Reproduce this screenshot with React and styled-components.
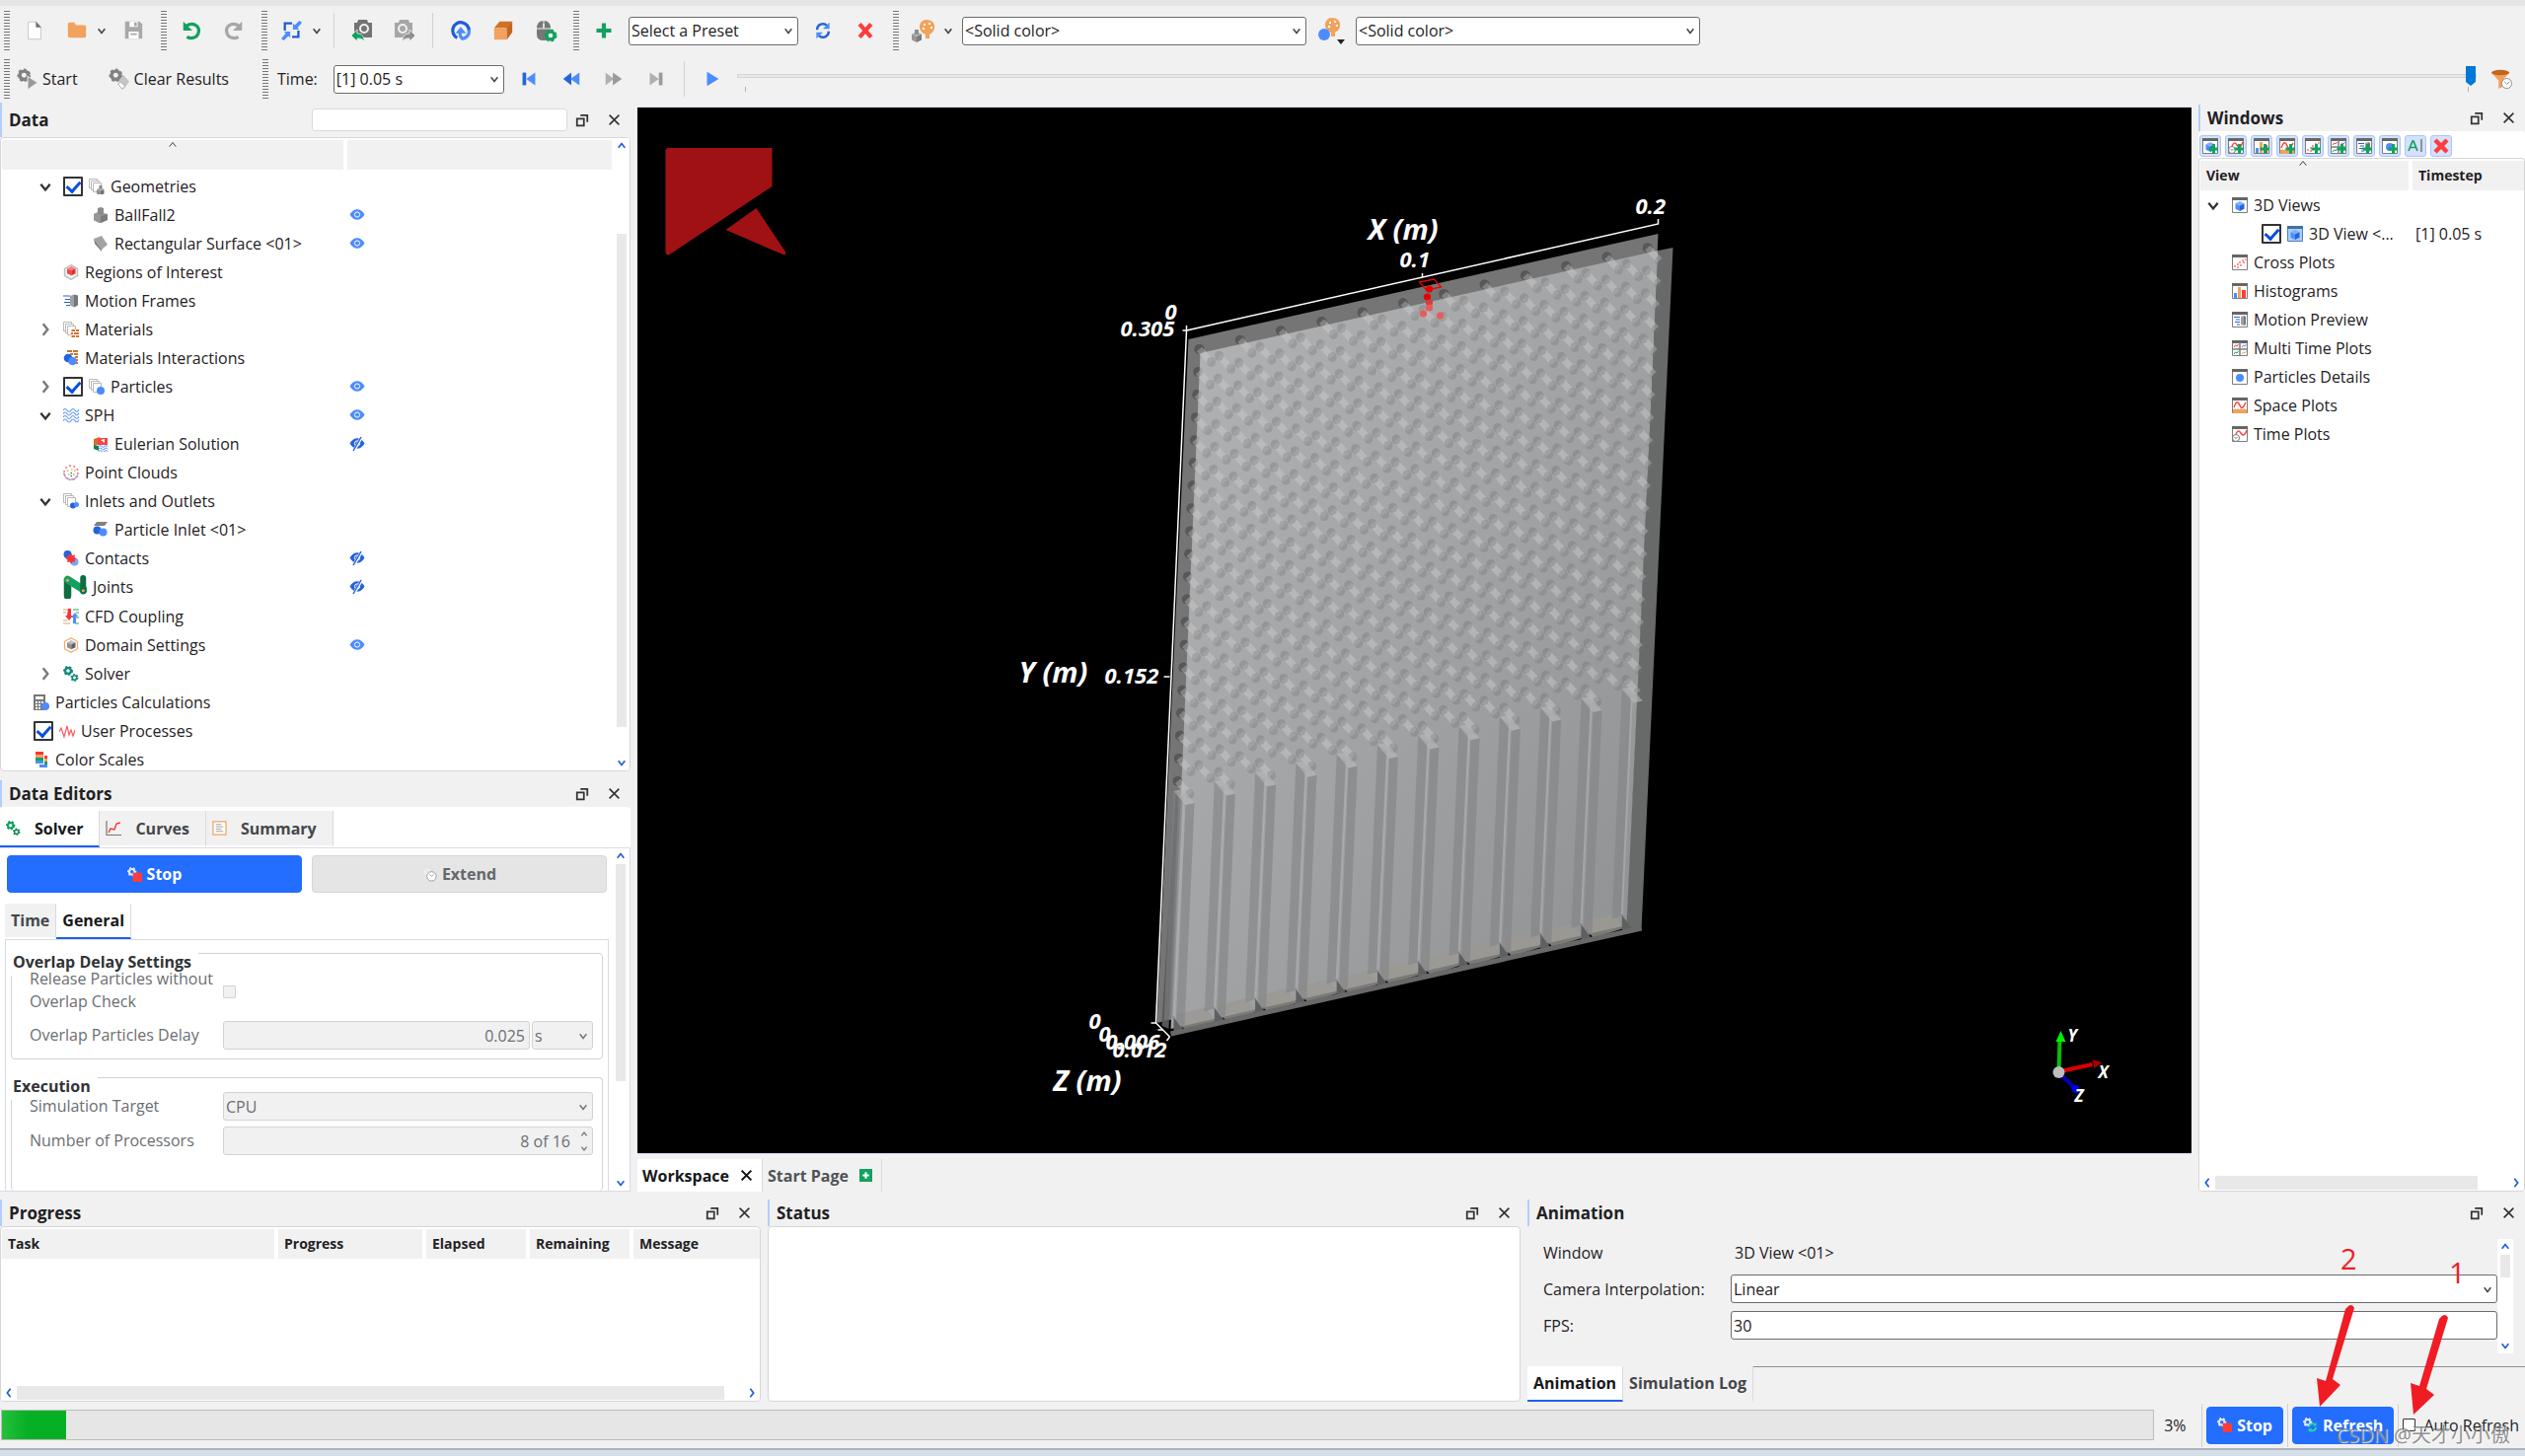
import React from 'react';
import styled, { createGlobalStyle, css } from 'styled-components';

const GlobalStyle = createGlobalStyle`
  * {
    box-sizing: border-box;
  }

  body {
    margin: 0;
    background: #f1f1f1;
    color: #1f2124;
    font-family: 'Open Sans', 'Noto Sans', 'Noto Sans CJK SC', sans-serif;
    font-size: 16px;
    line-height: 22px;
  }

  button,
  input,
  select {
    font: inherit;
    color: inherit;
  }

  button {
    border: 0;
    padding: 0;
    background: none;
  }

  svg {
    display: block;
    flex-shrink: 0;
  }
`;

/* ---------- icons ---------- */

const Svg = ({ size = 16, box = 16, children }) => (
  <svg width={size} height={size} viewBox={`0 0 ${box} ${box}`} fill="none" aria-hidden="true">
    {children}
  </svg>
);

const Stack = () => (
  <g stroke="#b9b9b9" fill="#fff">
    <path d="M.5.5h8v9h-8z" />
    <path d="M2.500 2.500h8v9h-8z" />
    <path d="M4.500 4.500h8v9h-8z" />
  </g>
);

const Frame = () => (
  <>
    <path d="M.5.5h15v15H.5z" fill="#fff" stroke="#7d7d7d" />
    <path d="M0 0h16v3H0z" fill="#666" />
  </>
);

const Cube = ({ x = 0, y = 0, s = 1, top = '#7db0ff', left = '#4d8cff', right = '#2463dc' }) => (
  <g transform={`translate(${x} ${y}) scale(${s})`}>
    <path d="M5 0l5 2.500L5 5 0 2.500z" fill={top} />
    <path d="M0 2.500L5 5v6L0 8.500z" fill={left} />
    <path d="M10 2.500L5 5v6l5-2.500z" fill={right} />
  </g>
);

const Gear = ({ x, y, r = 4, color = '#12a15f', hole = '#fff' }) => (
  <g>
    <circle cx={x} cy={y} r={r - 1} fill={color} />
    <circle cx={x} cy={y} r={r - 1} stroke={color} strokeWidth="2" strokeDasharray={`${r * 0.4} ${r * 0.385}`} />
    <circle cx={x} cy={y} r={r * 0.36} fill={hole} />
  </g>
);

const Plus = ({ x, y }) => (
  <path d={`M${x} ${y - 5}v10M${x - 5} ${y}h10`} stroke="#12a15f" strokeWidth="3" />
);

const treeIcons = {
  geometries: (
    <>
      <Stack />
      <Cube x={8} y={9} s={0.75} top="#a9a9a9" left="#8e8e8e" right="#747474" />
      <path d="M10.500 7h3v3h-3z" fill="#8a8a8a" />
    </>
  ),
  body: (
    <>
      <Cube x={1} y={4} s={1.1} top="#b5b5b5" left="#979797" right="#7c7c7c" />
      <path d="M1 7l6-2 8 2v6l-7 3-7-3z" fill="#979797" />
      <path d="M8 9l7-2v6l-7 3z" fill="#7c7c7c" />
      <path d="M5 1l3-1 3 1v6l-3 1-3-1z" fill="#8a8a8a" />
    </>
  ),
  surface: (
    <>
      <path d="M1 3l8-3 6 9-6 5z" fill="#a3a3a3" />
      <path d="M1 3l8 11v2L2 8z" fill="#7d7d7d" />
    </>
  ),
  regions: (
    <>
      <path d="M8 .7l6.500 3.600v7.400L8 15.300l-6.500-3.600V4.300z" fill="#f1f1f1" stroke="#bdbdbd" strokeWidth="1.400" />
      <Cube x={4} y={2} s={0.85} top="#ff7b7f" left="#fb4247" right="#d92f35" />
    </>
  ),
  motion: (
    <>
      <path d="M0 3h7M2 6.500h5M1 9.500h6M3 12.500h4" stroke="#2b61d1" />
      <path d="M7 3l4-1.500v13L7 12.500z" fill="#a1a1a1" />
      <path d="M11 1.500l4 1v10l-4 2z" fill="#777" />
    </>
  ),
  materials: (
    <>
      <Stack />
      <path d="M8 8h8v8H8z" fill="#fff" />
      <path d="M8.500 9h3.500M13 9h3M8 12h2M11 12h5M8.500 15h3.500M13 15h3" stroke="#d0722a" strokeWidth="2" />
    </>
  ),
  interactions: (
    <>
      <path d="M4 1h5M10 1h5M7 4h3M11 4h4M12 7h3M12 10h3M12 13h3" stroke="#d0722a" strokeWidth="2" />
      <circle cx="5" cy="8" r="4.300" fill="#2463dc" />
      <circle cx="9.500" cy="11" r="4.300" fill="#4d8cff" />
    </>
  ),
  particles: (
    <>
      <Stack />
      <circle cx="12" cy="12" r="4" fill="#4d8cff" />
    </>
  ),
  waves: (
    <path
      d="M0 3q2-3 4 0t4 0 4 0 4-1M0 6.500q2-3 4 0t4 0 4 0 4-1M0 10q2-3 4 0t4 0 4 0 4-1M0 13.500q2-3 4 0t4 0 4 0 4-1"
      stroke="#5c94f5"
      strokeWidth="1.100"
    />
  ),
  eulerian: (
    <>
      <path d="M1 3l6-2v7L1 10z" fill="#d0722a" />
      <path d="M5 2h10v7H5z" fill="#fb4247" />
      <path d="M8 4l4-1v4M1 10h5v4l-5-2z" fill="#fff" />
      <path d="M1 9l5 1v5l-5-2z" fill="#12814c" />
      <path d="M6 9h10v7H6z" fill="#fff" />
      <path d="M6 10.500q1.500-2 3 0t3 0 3 0M6 13q1.500-2 3 0t3 0 3 0M6 15.500q1.500-2 3 0t3 0 3 0" stroke="#4d8cff" />
    </>
  ),
  cloud: (
    <>
      <circle cx="8" cy="8" r="7" stroke="#fb7073" strokeWidth="1.600" strokeDasharray="2 2.400" />
      <path d="M1 8.500a7 7 0 0 0 14 0" stroke="#6b9bf5" strokeWidth="1.600" strokeDasharray="2 2.400" />
      <path d="M4 6h1.500M8 5h1.500M11 6h1.500M5 10h1.500M10 10h1.500" stroke="#f2a25c" strokeWidth="1.500" />
      <path d="M7.500 8.500H9M7.500 11.500H9" stroke="#12a15f" strokeWidth="1.500" />
    </>
  ),
  inlets: (
    <>
      <Stack />
      <circle cx="10" cy="12.500" r="3" fill="#2463dc" />
      <circle cx="13.500" cy="11.500" r="2.500" fill="#4d8cff" />
    </>
  ),
  inlet: (
    <>
      <path d="M4 0h11l-3 4H1z" fill="#808080" />
      <circle cx="4.500" cy="8.500" r="4" fill="#2463dc" />
      <circle cx="10.500" cy="10.500" r="4" fill="#4d8cff" />
    </>
  ),
  contacts: (
    <>
      <circle cx="4.500" cy="4" r="4" fill="#2463dc" />
      <circle cx="11.500" cy="11.500" r="4" fill="#79a6f7" />
      <path d="M8 3l1.500 2L12 4.500 11.500 7l2 1.500-2 1 .5 2.500-2.500-.5L8 13.500l-1.500-2L4 12l.5-2.500-2-1L4.500 7 4 4.500l2.500.5z" fill="#fb3339" />
    </>
  ),
  joints: (
    <>
      <path d="M3 4v10" stroke="#0d6e41" strokeWidth="5" strokeLinecap="round" />
      <path d="M3 3l11 7" stroke="#12a15f" strokeWidth="5" strokeLinecap="round" />
      <path d="M13.500 2v9" stroke="#0d6e41" strokeWidth="4" strokeLinecap="round" />
      <circle cx="3" cy="3.500" r="1" fill="#f2a25c" />
      <circle cx="13.500" cy="10.500" r="1" fill="#f2a25c" />
    </>
  ),
  cfd: (
    <>
      <path d="M0 1h5M0 4h3M0 12h4M0 15h7" stroke="#d8a36a" />
      <path d="M10 1h6M13 4h3M12 9h4M12 15h4" stroke="#2ba56a" />
      <path d="M5 0h3v7h2l-4 5-4-5h2z" fill="#fb3339" />
      <path d="M10 15h3V8h2l-3-4-4 5h2z" fill="#4d8cff" />
    </>
  ),
  domain: (
    <>
      <path d="M8 .7l6.500 3.600v7.400L8 15.300l-6.500-3.600V4.300z" stroke="#f2a96b" strokeWidth="1.200" />
      <Cube x={4} y={3} s={0.85} top="#bbb" left="#8f8f8f" right="#606060" />
    </>
  ),
  gears: (
    <>
      <Gear x={5} y={5} r={5} color="#12887a" />
      <Gear x={11.5} y={12} r={4} color="#12887a" />
    </>
  ),
  greenGears: (
    <>
      <Gear x={5} y={5} r={5} color="#12a15f" />
      <Gear x={11.5} y={12} r={4} color="#0d8a4f" />
    </>
  ),
  calculator: (
    <>
      <path d="M0 0h12v16H0z" fill="#777" />
      <path d="M2 2h8v3H2zM2 7h2v2H2zM5 7h2v2H5zM8 7h2v2H8zM2 10h2v2H2zM5 10h2v2H5zM2 13h2v2H2zM5 13h2v2H5z" fill="#fff" />
      <circle cx="12" cy="12" r="4" fill="#4d8cff" />
    </>
  ),
  pulse: <path d="M0 9l2-4 3 9 3-11 2 9 2-5 2 6 2-6" stroke="#fb5a60" strokeWidth="1.200" />,
  scales: (
    <>
      <path d="M2 0h8v3H2z" fill="#fb3339" />
      <path d="M2 3h8v3H2z" fill="#f2a25c" />
      <path d="M2 6h8v3H2z" fill="#12a15f" />
      <path d="M2 9h8v3H2zM6 13h8v3H6z" fill="#4d8cff" />
      <path d="M11 4h3v3h-3z" fill="#fb3339" />
      <path d="M11 7h3v3h-3z" fill="#f2a25c" />
      <path d="M11 10h3v3h-3z" fill="#12a15f" />
    </>
  ),
  curves: (
    <>
      <path d="M1 0v14.500h15" stroke="#777" strokeWidth="1.200" />
      <path d="M3 12l2-4 4 1 2-6 4-1" stroke="#fb3339" strokeWidth="1.400" />
    </>
  ),
  summary: (
    <>
      <path d="M1 1h14v14H1z" fill="#fff" stroke="#f2a25c" strokeWidth="1.300" />
      <path d="M4 4h6M4 6.500h8M4 9h6M4 11.500h8" stroke="#999" />
    </>
  ),
  stop: (
    <>
      <Gear x={5} y={5} r={5} color="#dfe8fb" hole="#236dff" />
      <path d="M6 6h10v10H6z" fill="#fb3d3d" />
    </>
  ),
  extend: (
    <>
      <Gear x={5} y={5} r={4} color="#efefef" hole="#e5e5e5" />
      <circle cx="10" cy="10" r="5" fill="#fff" stroke="#999" />
      <path d="M8 8l2 2 2-2" stroke="#999" />
    </>
  ),
  refresh: (
    <>
      <Gear x={5} y={5} r={5} color="#dfe8fb" hole="#236dff" />
      <path d="M6.500 10a4 4 0 0 1 7-2M14 10.500a4 4 0 0 1-7 2.500" stroke="#1fdd97" strokeWidth="2" />
      <path d="M14.500 5v4h-4zM6 16v-4h4z" fill="#1fdd97" />
    </>
  ),
  view3d: (
    <>
      <Frame />
      <Cube x={3.5} y={4} s={0.9} />
    </>
  ),
  view3dActive: (
    <>
      <path d="M.5.5h15v15H.5z" fill="#a9cdf5" stroke="#4d82b8" />
      <path d="M0 0h16v3H0z" fill="#41719f" />
      <Cube x={3.5} y={4} s={0.9} />
    </>
  ),
  cross: (
    <>
      <Frame />
      <path d="M2 12h2M5 10h2M5 13h2M7 8h2M8 11h2M10 6h2M11 8h2M13 5h1.500" stroke="#fb7073" strokeWidth="1.600" />
    </>
  ),
  histogram: (
    <>
      <Frame />
      <path d="M2 10h3v5H2z" fill="#4d8cff" />
      <path d="M6 4h3v11H6z" fill="#f2a25c" />
      <path d="M10 7h4v8h-4z" fill="#fb3d3d" />
    </>
  ),
  motionPreview: (
    <>
      <Frame />
      <path d="M2 5.500h6M4 8h4M3 10.500h5M5 13h3" stroke="#2b61d1" />
      <path d="M9 5l3-1v10l-3-1z" fill="#a1a1a1" />
      <path d="M12 4l2 1v8l-2 1z" fill="#777" />
    </>
  ),
  multi: (
    <>
      <Frame />
      <path d="M8 2v14M0 9h16" stroke="#7d7d7d" strokeWidth="1.500" />
      <path d="M2 7l1.500-2L5 6l1.500-2" stroke="#fb3d3d" />
      <path d="M10 7l1.500-2L13 6l1.500-2" stroke="#4d8cff" />
      <path d="M2 14l1.500-2L5 13l1.500-2" stroke="#12a15f" />
      <path d="M10 14l1.500-2L13 13l1.500-2" stroke="#f2a25c" />
    </>
  ),
  details: (
    <>
      <Frame />
      <circle cx="8" cy="9" r="4" fill="#4d8cff" />
    </>
  ),
  space: (
    <>
      <Frame />
      <path d="M1 12h14v4H1z" fill="#f2a25c" />
      <path d="M3 11v2M6 11v2M9 11v2M12 11v2" stroke="#f2a25c" />
      <path d="M2 10c2-6 4-7 6-2s4 1 6-3" stroke="#fb3d3d" strokeWidth="1.400" />
    </>
  ),
  time: (
    <>
      <Frame />
      <path d="M4 8c2-4 3-4 5-1s4 3 6-3" stroke="#fb3d3d" strokeWidth="1.400" />
      <circle cx="4" cy="12" r="3.500" fill="#fff" stroke="#777" />
      <path d="M2.500 11L4 12.500 5.500 11" stroke="#777" />
    </>
  ),
  label: (
    <>
      <path d="M1 13L5 3h1l4 10M2.500 9.500h6" stroke="#12a15f" strokeWidth="1.700" />
      <path d="M14 1v13" stroke="#777" strokeWidth="1.500" />
    </>
  ),
  remove: <path d="M2 2l12 12M14 2L2 14" stroke="#fb3d3d" strokeWidth="4.500" />,
};

const TreeIcon = ({ name, size = 16 }) => <Svg size={size}>{treeIcons[name]}</Svg>;

const Camera = ({ color, arrow, flip }) => (
  <g transform={flip ? 'translate(24 0) scale(-1 1)' : undefined}>
    <path d="M4 4h3l1-3h9l1 3h4v15H4z" fill={color} />
    <circle cx="14" cy="10" r="4" stroke="#f1f1f1" strokeWidth="2" />
    <path d="M1 17l6-6v4c5 0 7 3 7 8-2-3-4-3-7-3v3z" fill={arrow} stroke="#f1f1f1" strokeWidth=".8" />
  </g>
);

const Palette = () => (
  <>
    <path d="M15 1c6 0 9 4 8 9-1 4-4 5-5 6v4h-4v-4c-4-2-6-4-6-8 0-4 3-7 7-7z" fill="#f2a25c" />
    <path d="M12 6h2M17 5h2M11 10h2M19 9h2" stroke="#fff" strokeWidth="2" />
  </>
);

const toolIcons = {
  doc: (
    <>
      <path d="M5 2.500h9l5 6v13H5z" fill="#fff" stroke="#c4c4c4" />
      <path d="M13.500 2l6 6.500h-6z" fill="#707070" />
    </>
  ),
  folder: <path d="M2 5q0-2 2-2h5l2 3h9q2 0 2 2v10q0 2-2 2H4q-2 0-2-2z" fill="#f2a25c" />,
  save: (
    <>
      <path d="M3 2h16l3 3v16H3z" fill="#a9a9a9" />
      <path d="M8 2h9v6H8zM7 13h11v8H7z" fill="#fff" />
      <path d="M13 3h3v4h-3zM9 15h7v2H9z" fill="#a9a9a9" />
    </>
  ),
  undo: (
    <>
      <path d="M6 7c8-5 15 0 14 6-1 7-8 9-13 6" stroke="#12a15f" strokeWidth="3.500" />
      <path d="M3 2v10h10z" fill="#12a15f" />
    </>
  ),
  redo: (
    <>
      <path d="M18 7C10 2 3 7 4 13c1 7 8 9 13 6" stroke="#a6a6a6" strokeWidth="3.500" />
      <path d="M21 2v10H11z" fill="#a6a6a6" />
    </>
  ),
  fit: (
    <>
      <path d="M4 12V4h8M19 12v7h-7" stroke="#1d5bd8" strokeWidth="2.500" />
      <path d="M13 4v7h7l-2-2 5-6-3-2-5 5zM10 20v-7H3l2 2-5 6 3 2 5-5z" fill="#4d8cff" />
    </>
  ),
  camera: <Camera color="#737373" arrow="#12a15f" />,
  cameraOff: <Camera color="#a6a6a6" arrow="#8f8f8f" flip />,
  rotate: (
    <>
      <path d="M8 20A9 9 0 1 1 21 12" stroke="#1d5bd8" strokeWidth="3.500" />
      <path d="M21 11c1 6-3 9-7 10-2-1-3-4-3-7" stroke="#4d8cff" strokeWidth="3.500" />
      <path d="M6 15l6-7 6 7z" fill="#4d8cff" />
    </>
  ),
  box: (
    <>
      <path d="M2 9l6-7h14l-5 7z" fill="#d0722a" />
      <path d="M2 9h14v13H2z" fill="#f2a25c" />
      <path d="M16 9l6-7v12l-6 8z" fill="#c2661f" />
    </>
  ),
  mouse: (
    <>
      <path d="M3 10q0-8 7-8t7 8v6q0 6-7 6t-7-6z" fill="#777" />
      <path d="M3 10h14M10 2v8" stroke="#f1f1f1" />
      <path d="M9 5h2v4H9z" fill="#ddd" />
      <Gear x={17} y={17} r={6.5} hole="#f1f1f1" />
    </>
  ),
  plus: <path d="M12 3v18M3 12h18" stroke="#12a15f" strokeWidth="5" />,
  sync: (
    <>
      <path d="M5 11a7 7 0 0 1 12-5M19 13a7 7 0 0 1-12 5" stroke="#2463dc" strokeWidth="3" />
      <path d="M20 2v8h-8zM4 22v-8h8z" fill="#4d8cff" />
    </>
  ),
  cross: <path d="M5 4l14 16M19 4L5 20" stroke="#fb3d3d" strokeWidth="5" />,
  paintBody: (
    <>
      <Palette />
      <Cube x={0} y={13} s={1} top="#b5b5b5" left="#979797" right="#7c7c7c" />
      <path d="M3 11h4v5H3z" fill="#8e8e8e" />
    </>
  ),
  paintParticle: (
    <>
      <Palette />
      <circle cx="7" cy="18" r="6" fill="#4d8cff" />
    </>
  ),
  start: (
    <>
      <Gear x={8} y={8} r={7.5} color="#828282" hole="#f1f1f1" />
      <path d="M12 9l11 7-11 8z" fill="#9b9b9b" stroke="#f1f1f1" />
    </>
  ),
  clear: (
    <>
      <Gear x={8} y={8} r={7.5} color="#828282" hole="#f1f1f1" />
      <path d="M16 7l7 8-7 9-6-6z" fill="#c4c4c4" />
      <path d="M13 15l5 5-3 3-4-5z" fill="#fff" stroke="#b0b0b0" />
    </>
  ),
  first: (
    <>
      <path d="M5 5h4v14H5z" fill="#2463dc" />
      <path d="M19 5v14l-10-7z" fill="#4d8cff" />
    </>
  ),
  prev: (
    <>
      <path d="M12 5v14l-9-7z" fill="#2463dc" />
      <path d="M21 5v14l-10-7z" fill="#4d8cff" />
    </>
  ),
  next: (
    <>
      <path d="M3 5v14l9-7z" fill="#b0b0b0" />
      <path d="M11 5v14l10-7z" fill="#9a9a9a" />
    </>
  ),
  last: (
    <>
      <path d="M5 5v14l10-7z" fill="#b0b0b0" />
      <path d="M15 5h4v14h-4z" fill="#9a9a9a" />
    </>
  ),
  play: <path d="M6 4v16l13-8z" fill="#4d8cff" />,
  funnel: (
    <>
      <path d="M1 5l8 9v9l4-2v-7l8-9z" fill="#f2a25c" />
      <ellipse cx="11" cy="5" rx="10" ry="3" fill="#c2661f" />
      <circle cx="18" cy="17" r="5.500" fill="#fff" stroke="#888" />
      <path d="M15.500 15l2.500 2.500 3-2" stroke="#888" />
    </>
  ),
};

const ToolIcon = ({ name, size = 22 }) => (
  <Svg size={size} box={24}>
    {toolIcons[name]}
  </Svg>
);

const arrows = {
  down: 'M2 4l4 5 4-5',
  up: 'M2 8l4-5 4 5',
  left: 'M8 1L4 6l4 5',
  right: 'M4 1l4 5-4 5',
};

const Arrow = ({ dir = 'down', size = 10, color = '#444', weight = 2 }) => (
  <Svg size={size} box={12}>
    <path d={arrows[dir]} stroke={color} strokeWidth={weight} />
  </Svg>
);

const Eye = ({ hidden }) => (
  <Svg>
    <path d="M.5 7.500c4-7 11-7 15 0-4 7-11 7-15 0z" fill={hidden ? '#2463dc' : '#4d8cff'} />
    <circle cx="8" cy="7.500" r="2.600" stroke="#fff" />
    {hidden && (
      <>
        <path d="M4 16L13 0" stroke="#fff" strokeWidth="3" />
        <path d="M4 15L12 1" stroke="#2463dc" strokeWidth="1.500" />
      </>
    )}
  </Svg>
);

/* ---------- shell ---------- */

const Window = styled.div`
  display: flex;
  flex-direction: column;
  height: 100vh;
  position: relative;
  overflow: hidden;
  border-bottom: 6px solid #d5dfea;
`;

const TopStrip = styled.div`
  flex: none;
  height: 6px;
  background: #e5e5e5;
`;

const Toolbar = styled.div`
  display: flex;
  flex: none;
  align-items: center;
  gap: 7px;
  height: ${({ $height }) => $height}px;
  padding: 0 6px 0 1px;
`;

const Handle = styled.span`
  flex: none;
  width: 6px;
  height: 40px;
  margin-left: 3px;
  background: repeating-linear-gradient(#777 0 1px, transparent 1px 3px);
`;

const Separator = styled.span`
  flex: none;
  width: 1px;
  height: 36px;
  margin: 0 3px;
  background: #d0d0d0;
`;

const IconGroup = styled.div`
  display: flex;
  flex: none;
`;

const IconButton = styled.button`
  display: grid;
  place-items: center;
  flex: none;
  width: ${({ $narrow }) => ($narrow ? 14 : 36)}px;
  height: 32px;
`;

const LabelButton = styled.button`
  display: flex;
  align-items: center;
  gap: 4px;
  padding-right: 24px;
`;

const TimeLabel = styled.label`
  margin: 0 9px 0 2px;
`;

const SelectWrap = styled.span`
  display: grid;
  align-items: center;
  flex: ${({ $width }) => ($width ? 'none' : '1')};
  width: ${({ $width }) => ($width ? `${$width}px` : 'auto')};

  > * {
    grid-area: 1 / 1;
  }

  > svg {
    justify-self: end;
    margin-right: 5px;
    pointer-events: none;
  }
`;

const field = css`
  width: 100%;
  min-width: 0;
  height: 29px;
  padding: 0 4px 0 2px;
  border: 1px solid ${({ disabled }) => (disabled ? '#d3d3d3' : '#6c6c6c')};
  border-radius: 3px;
  background: ${({ disabled }) => (disabled ? '#f1f1f2' : '#fff')};
  color: ${({ disabled }) => (disabled ? '#6b6e72' : '#1f2124')};
  opacity: 1;
`;

const StyledSelect = styled.select`
  ${field}
  appearance: none;
`;

const TextInput = styled.input`
  ${field}
  text-align: ${({ $align }) => $align || 'left'};
  padding-right: ${({ $endSpace }) => $endSpace || 4}px;
`;

const Select = ({ width, value, ...rest }) => (
  <SelectWrap $width={width}>
    <StyledSelect defaultValue={value} {...rest}>
      <option>{value}</option>
    </StyledSelect>
    <Arrow color={rest.disabled ? '#777' : '#444'} weight={1.8} />
  </SelectWrap>
);

const SliderBox = styled.div`
  flex: 1;
  display: flex;
  flex-direction: column;
`;

const Slider = styled.input`
  appearance: none;
  width: 100%;
  height: 20px;
  margin: 0;
  background: none;

  &::-webkit-slider-runnable-track {
    height: 4px;
    border: 1px solid #d2d6d6;
    background: #e7eaea;
  }

  &::-webkit-slider-thumb {
    appearance: none;
    width: 10px;
    height: 20px;
    margin: -9px 3px 0 0;
    background: #0078d7;
    clip-path: polygon(0 0, 100% 0, 100% 80%, 50% 100%, 0 80%);
  }
`;

const Ticks = styled.div`
  height: 5px;
  margin: 1px 8px 0;
  border: solid #b5b0a5;
  border-width: 0 1px;
`;

/* ---------- docks ---------- */

const Main = styled.main`
  flex: 1;
  min-height: 0;
  display: grid;
  grid-template-columns: 639px minmax(0, 1fr) 331px;
  grid-template-rows: minmax(0, 1fr);
  gap: 7px;
  margin-bottom: 8px;
`;

const LeftColumn = styled.div`
  display: grid;
  grid-template-rows: minmax(0, 678fr) minmax(0, 426fr);
`;

const Dock = styled.section`
  display: flex;
  flex-direction: column;
  min-width: 0;
  min-height: 0;
  padding-top: ${({ $top }) => $top || 0}px;
`;

const TitleBar = styled.header`
  display: flex;
  align-items: center;
  flex: none;
  height: ${({ $tall }) => ($tall ? 35 : 27)}px;
  padding: 0 9px 0 7px;
  border-left: 2px solid #b3cdfb;

  h2 {
    flex: 1;
    margin: 0;
    font-size: 17px;
    font-weight: 700;
    line-height: 22px;
  }
`;

const TitleButton = styled.button`
  display: grid;
  place-items: center;
  width: 16px;
  height: 20px;
  margin-left: 16px;
`;

const SearchInput = styled.input`
  width: 259px;
  height: 23px;
  margin-right: -9px;
  border: 1px solid #dadada;
  border-radius: 3px;
  background: #fff;
`;

const DockTitle = ({ title, tall, search }) => (
  <TitleBar $tall={tall}>
    <h2>{title}</h2>
    {search && <SearchInput aria-label="Search data" />}
    <TitleButton aria-label={`Float ${title}`}>
      <Svg size={14}>
        <path d="M2 6h8v8H2zM6 2h8v8" stroke="#333" strokeWidth="2" />
      </Svg>
    </TitleButton>
    <TitleButton aria-label={`Close ${title}`}>
      <Svg size={13}>
        <path d="M2 2l12 12M14 2L2 14" stroke="#333" strokeWidth="2" />
      </Svg>
    </TitleButton>
  </TitleBar>
);

const Panel = styled.div`
  flex: 1;
  display: flex;
  flex-direction: ${({ $column }) => ($column ? 'column' : 'row')};
  min-height: 0;
  overflow: hidden;
  border: 1px solid #d6d6d6;
  border-radius: 4px;
  background: #fff;
`;

const Bar = styled.div`
  display: flex;
  flex: none;
  flex-direction: ${({ $horizontal }) => ($horizontal ? 'row' : 'column')};
  align-items: center;
  ${({ $horizontal }) => ($horizontal ? 'height: 16px' : 'width: 16px')};
  background: #fff;
`;

const BarArrow = styled.button`
  display: grid;
  place-items: center;
  flex: none;
  width: 16px;
  height: 16px;
`;

const BarSpace = styled.span`
  flex: ${({ $grow }) => $grow} 0 0;
`;

const BarThumb = styled.span`
  flex: ${({ $grow }) => $grow} 0 0;
  ${({ $horizontal }) => ($horizontal ? 'height: 14px' : 'width: 10px')};
  background: #e8e8e8;
`;

const ScrollBar = ({ horizontal, before = 0, thumb, after = 0 }) => (
  <Bar $horizontal={horizontal}>
    <BarArrow aria-label="Scroll back">
      <Arrow dir={horizontal ? 'left' : 'up'} color="#1d5bd8" />
    </BarArrow>
    <BarSpace $grow={before} />
    <BarThumb $horizontal={horizontal} $grow={thumb} />
    <BarSpace $grow={after} />
    <BarArrow aria-label="Scroll forward">
      <Arrow dir={horizontal ? 'right' : 'down'} color="#1d5bd8" />
    </BarArrow>
  </Bar>
);

/* ---------- data tree ---------- */

const TreeBody = styled.div`
  flex: 1;
  min-width: 0;
  padding: 2px 2px 0 1px;
`;

const TreeHead = styled.div`
  display: grid;
  grid-template-columns: 346px 1fr;
  gap: 4px;
  height: 30px;
  margin-bottom: 2px;

  span {
    display: flex;
    justify-content: center;
    background: #f1f1f1;
  }
`;

const TreeList = styled.ul`
  margin: 0;
  padding: 0;
  list-style: none;
`;

const TreeRow = styled.li`
  display: flex;
  align-items: center;
  height: ${({ $tall }) => ($tall ? 30 : 29)}px;
  padding-left: ${({ $level }) => [2, 32, 62][$level]}px;
`;

const TreeLabel = styled.label`
  display: flex;
  align-items: center;
  gap: 6px;
  flex: 1;
`;

const Expander = styled.button`
  display: grid;
  place-items: center;
  width: 24px;
  height: 20px;
  margin-right: 6px;
`;

const EyeButton = styled.button`
  width: 16px;
  margin-right: 250px;
`;

const CheckBox = styled.input`
  appearance: none;
  display: grid;
  place-items: center;
  flex: none;
  width: ${({ $size }) => $size || 20}px;
  height: ${({ $size }) => $size || 20}px;
  margin: 0;
  border: ${({ $size }) => ($size ? 1 : 2)}px solid ${({ disabled }) => (disabled ? '#d3d3d3' : '#333')};
  border-radius: 1px;
  background: ${({ disabled }) => (disabled ? '#f1f1f2' : '#fff')};

  &:checked::before {
    content: '';
    width: 6px;
    height: 11px;
    margin-bottom: 4px;
    border: solid #0a4fe0;
    border-width: 0 3px 3px 0;
    transform: rotate(42deg);
  }
`;

const treeRows = [
  { level: 1, label: 'Geometries', icon: 'geometries', check: true, open: true },
  { level: 2, label: 'BallFall2', icon: 'body', eye: 'on' },
  { level: 2, label: 'Rectangular Surface <01>', icon: 'surface', eye: 'on' },
  { level: 1, label: 'Regions of Interest', icon: 'regions' },
  { level: 1, label: 'Motion Frames', icon: 'motion' },
  { level: 1, label: 'Materials', icon: 'materials', open: false },
  { level: 1, label: 'Materials Interactions', icon: 'interactions' },
  { level: 1, label: 'Particles', icon: 'particles', check: true, open: false, eye: 'on' },
  { level: 1, label: 'SPH', icon: 'waves', open: true, eye: 'on' },
  { level: 2, label: 'Eulerian Solution', icon: 'eulerian', eye: 'off' },
  { level: 1, label: 'Point Clouds', icon: 'cloud' },
  { level: 1, label: 'Inlets and Outlets', icon: 'inlets', open: true },
  { level: 2, label: 'Particle Inlet <01>', icon: 'inlet' },
  { level: 1, label: 'Contacts', icon: 'contacts', eye: 'off' },
  { level: 1, label: 'Joints', icon: 'joints', big: true, eye: 'off' },
  { level: 1, label: 'CFD Coupling', icon: 'cfd' },
  { level: 1, label: 'Domain Settings', icon: 'domain', eye: 'on' },
  { level: 1, label: 'Solver', icon: 'gears', open: false },
  { level: 0, label: 'Particles Calculations', icon: 'calculator' },
  { level: 0, label: 'User Processes', icon: 'pulse', check: true },
  { level: 0, label: 'Color Scales', icon: 'scales' },
];

const DataDock = () => (
  <Dock>
    <DockTitle title="Data" tall search />
    <Panel>
      <TreeBody>
        <TreeHead>
          <span>
            <Arrow dir="up" weight={1.2} />
          </span>
          <span />
        </TreeHead>
        <TreeList>
          {treeRows.map((row) => (
            <TreeRow key={row.label} $level={row.level} $tall={row.big}>
              <Expander aria-label={`Toggle ${row.label}`}>
                {row.open === true && <Arrow size={14} color="#333" />}
                {row.open === false && <Arrow dir="right" size={14} color="#777" />}
              </Expander>
              <TreeLabel>
                {row.check && <CheckBox type="checkbox" defaultChecked />}
                <TreeIcon name={row.icon} size={row.big ? 24 : 16} />
                {row.label}
              </TreeLabel>
              {row.eye && (
                <EyeButton aria-label={`Visibility of ${row.label}`}>
                  <Eye hidden={row.eye === 'off'} />
                </EyeButton>
              )}
            </TreeRow>
          ))}
        </TreeList>
      </TreeBody>
      <ScrollBar before={81} thumb={502} after={28} />
    </Panel>
  </Dock>
);

/* ---------- data editors ---------- */

const Tabs = styled.div`
  display: flex;
  flex: none;
  padding: ${({ $padding }) => $padding || '0'};
`;

const Tab = styled.button`
  display: flex;
  align-items: center;
  gap: ${({ $gap }) => $gap || 0}px;
  height: ${({ $height }) => $height || 36}px;
  padding: ${({ $padding }) => $padding || '0 6px'};
  border-right: 1px solid #d8dae0;
  border-bottom: 2px solid ${({ $active }) => ($active ? '#1d62e8' : 'transparent')};
  background: ${({ $active }) => ($active ? '#fff' : '#f1f1f1')};
  background-clip: padding-box;
  color: ${({ $active }) => ($active ? '#16181a' : '#44474b')};
  font-weight: 700;
  white-space: nowrap;
`;

const EditorPanel = styled.div`
  flex: 1;
  display: flex;
  flex-direction: column;
  min-height: 0;
  border-radius: 4px 4px 0 0;
  background: #fff;
`;

const EditorBody = styled.div`
  flex: 1;
  display: flex;
  min-height: 0;
  gap: 4px;
  padding-right: 1px;
  border: solid #d8dce8;
  border-width: 1px 1px 1px 0;
`;

const EditorContent = styled.div`
  flex: 1;
  display: flex;
  flex-direction: column;
  min-width: 0;
  padding-top: 7px;
  overflow: hidden;
`;

const ActionRow = styled.div`
  display: grid;
  grid-template-columns: 1fr 1fr;
  gap: 10px;
  flex: none;
  margin: 0 2px 11px 7px;
`;

const ActionButton = styled.button`
  display: flex;
  align-items: center;
  justify-content: center;
  gap: 5px;
  flex: none;
  height: 38px;
  padding: 0 10px;
  border: 1px solid #236dff;
  border-radius: 4px;
  background: #236dff;
  color: #fff;
  font-weight: 700;

  &:disabled {
    border-color: #d6d6d6;
    background: #e5e5e5;
    color: #64676b;
  }
`;

const SubFrame = styled.div`
  flex: 1;
  display: flex;
  flex-direction: column;
  min-height: 0;
  gap: 18px;
  margin-left: 5px;
  padding: 13px 5px 0;
  border: solid #d8dce8;
  border-width: 1px 1px 0;
`;

const Group = styled.div`
  flex: ${({ $fill }) => ($fill ? '1' : 'none')};
  padding: 0 9px 9px 0;
  border: solid #d3d3d3;
  border-width: 1px 1px ${({ $fill }) => ($fill ? 0 : 1)}px;
  border-radius: 4px;

  h3 {
    width: fit-content;
    height: 23px;
    margin: -1px 0 -8px -1px;
    padding: 0 7px 0 2px;
    background: #fff;
    color: #303336;
    font-size: 16px;
    line-height: 18px;
  }
`;

const GroupGrid = styled.div`
  display: grid;
  grid-template-columns: 196px 1fr;
  grid-auto-rows: minmax(29px, auto);
  align-items: center;
  row-gap: 6px;
  padding-left: 18px;
  color: #6b6e72;

  label {
    line-height: 23px;
  }
`;

const LongLabel = styled.label`
  max-width: 194px;
  padding-bottom: 2px;
`;

const UnitField = styled.div`
  display: grid;
  grid-template-columns: 1fr 62px;
  gap: 2px;
`;

const SpinField = styled.div`
  display: grid;
  align-items: center;

  > * {
    grid-area: 1 / 1;
  }
`;

const SpinArrows = styled.span`
  display: grid;
  gap: 6px;
  justify-self: end;
  margin-right: 5px;
`;

const EditorsDock = () => (
  <Dock $top={9}>
    <DockTitle title="Data Editors" />
    <EditorPanel>
      <Tabs role="tablist" $padding="4px 0 0">
        <Tab role="tab" $active $gap={14} $height={37} $padding="0 16px 0 6px">
          <TreeIcon name="greenGears" size={15} />
          Solver
        </Tab>
        <Tab role="tab" $gap={14} $height={37} $padding="0 16px 0 6px">
          <TreeIcon name="curves" />
          Curves
        </Tab>
        <Tab role="tab" $gap={14} $height={37} $padding="0 16px 0 6px">
          <TreeIcon name="summary" size={15} />
          Summary
        </Tab>
      </Tabs>
      <EditorBody>
        <EditorContent>
          <ActionRow>
            <ActionButton>
              <TreeIcon name="stop" size={15} />
              Stop
            </ActionButton>
            <ActionButton disabled>
              <TreeIcon name="extend" size={15} />
              Extend
            </ActionButton>
          </ActionRow>
          <Tabs role="tablist" $padding="0 0 0 5px">
            <Tab role="tab">Time</Tab>
            <Tab role="tab" $active>
              General
            </Tab>
          </Tabs>
          <SubFrame>
            <Group role="group" aria-labelledby="overlap-title">
              <h3 id="overlap-title">Overlap Delay Settings</h3>
              <GroupGrid>
                <LongLabel htmlFor="release">Release Particles without Overlap Check</LongLabel>
                <CheckBox id="release" type="checkbox" $size={13} disabled />
                <label htmlFor="delay">Overlap Particles Delay</label>
                <UnitField>
                  <TextInput id="delay" defaultValue="0.025" $align="right" disabled />
                  <Select value="s" aria-label="Delay unit" disabled />
                </UnitField>
              </GroupGrid>
            </Group>
            <Group role="group" aria-labelledby="execution-title" $fill>
              <h3 id="execution-title">Execution</h3>
              <GroupGrid>
                <label htmlFor="target">Simulation Target</label>
                <Select id="target" value="CPU" disabled />
                <label htmlFor="processors">Number of Processors</label>
                <SpinField>
                  <TextInput id="processors" defaultValue="8 of 16" $align="right" $endSpace={22} disabled />
                  <SpinArrows>
                    <Arrow dir="up" size={8} color="#777" />
                    <Arrow size={8} color="#777" />
                  </SpinArrows>
                </SpinField>
              </GroupGrid>
            </Group>
          </SubFrame>
        </EditorContent>
        <ScrollBar thumb={218} after={94} />
      </EditorBody>
    </EditorPanel>
  </Dock>
);

/* ---------- 3D view ---------- */

const Center = styled.div`
  display: flex;
  flex-direction: column;
  min-width: 0;
  min-height: 0;
  padding-top: 4px;
`;

const Viewport = styled.div`
  flex: 1;
  min-height: 0;
  border: solid #d8dff0;
  border-width: 1px 0;
  background: #000;

  svg {
    width: 100%;
    height: 100%;
  }

  text {
    fill: #fff;
    font-family: 'Open Sans', 'Noto Sans', sans-serif;
    font-style: italic;
    font-weight: 700;
  }
`;

const WorkTabs = styled.div`
  display: flex;
  flex: none;
  height: 33px;
  margin-top: 5px;
`;

const WorkTab = styled.button`
  display: flex;
  align-items: center;
  gap: 11px;
  padding: 0 9px 0 5px;
  border-right: 1px solid #d8dae0;
  background: ${({ $active }) => ($active ? '#fff' : 'transparent')};
  color: ${({ $active }) => ($active ? '#16181a' : '#505357')};
  font-weight: 700;
`;

const range = (n) => Array.from({ length: n }, (_, i) => i);

const pegPoint = ([c, r]) => [1215 + 41.3 * c - 1.15 * r, 354 - 9.35 * c + 23.05 * r];

/* Back end of every peg: twelve columns, with a half-step row between two full rows */
const pegs = [
  ...range(20).flatMap((r) => range(12).map((c) => [c, r])),
  ...range(19).flatMap((r) => range(11).map((c) => [c + 0.5, r + 0.5])),
].map(pegPoint);

/* Pegs seen past the front sheet, along the top and the left side */
const edgePegs = [...range(12).map((c) => [c, 0]), ...range(20).map((r) => [0, r])].map(pegPoint);

const points = (list) => list.map((p) => p.join(',')).join(' ');

const Divider = ({ index }) => {
  const x = 1189 + 41.3 * index;
  const y = 802 - 9.4 * index;
  const lastWall = index === 11;
  return (
    <g>
      <polygon points={points([[x, y], [x + 10, y + 7], [x, y + 230], [x - 10, y + 233]])} fill="#828385" opacity=".6" />
      {!lastWall && (
        <>
          <polygon
            points={points([[x + 2, y + 227], [x + 32, y + 219], [x + 43, y + 233], [x + 12, y + 243]])}
            fill="#9b9892"
            opacity=".8"
          />
          <polygon points={points([[x + 12, y + 14], [x + 21, y + 12], [x + 11, y + 239], [x + 2, y + 243]])} fill="#858688" opacity=".7" />
        </>
      )}
      <path d={`M${x + 10} ${y + 9}L${x} ${y + 228}`} stroke="#b4b5b6" strokeWidth="2" opacity=".6" />
      <polygon points={points([[x, y], [x + 9, y - 2], [x + 21, y + 12], [x + 12, y + 14]])} fill="#b9b9b9" opacity=".6" />
      <polygon points={points([[x, y + 229], [x + 10, y + 243], [x, y + 246]])} fill="#5e5f5f" />
    </g>
  );
};

const axisText = [
  ['X (m)', 1386, 243, 29],
  ['0.1', 1418, 271, 22],
  ['0.2', 1657, 217, 22],
  ['0', 1180, 324, 22],
  ['0.305', 1135, 341, 22],
  ['Y (m)', 1032, 692, 29],
  ['0.152', 1119, 693, 22],
  ['0', 1103, 1043, 22],
  ['0', 1113, 1056, 22],
  ['0.006', 1120, 1064, 22],
  ['0.012', 1127, 1072, 22],
  ['Z (m)', 1067, 1106, 29],
  ['Y', 2095, 1056, 17],
  ['X', 2126, 1093, 17],
  ['Z', 2102, 1117, 17],
];

const Scene = () => (
  <svg viewBox="646 109 1574 1060" preserveAspectRatio="xMidYMid meet" role="img" aria-label="3D View">
    <defs>
      <linearGradient id="glass" x1="0" y1="0" x2="1" y2="1">
        <stop offset="0" stopColor="#b3b4b6" />
        <stop offset=".5" stopColor="#a2a3a5" />
        <stop offset="1" stopColor="#8e8f90" />
      </linearGradient>
    </defs>

    <path d="M677 150h105v39l-104 69q-4 1-4-3V153q0-3 3-3z" fill="#a01114" />
    <path d="M766 211l30 45q0 3-3 2l-58-25z" fill="#a01114" />

    <polygon points="1204,344 1680,237 1647,930 1172,1037" fill="#757575" />
    {edgePegs.map(([x, y]) => (
      <ellipse key={`${x}-${y}`} cx={x} cy={y} rx="5" ry="5" fill="#555" />
    ))}
    <polygon points="1680,254 1695,251 1663,943 1647,947" fill="#686969" />
    <polygon points="1216,358 1680,254 1648,938 1186,1043" fill="url(#glass)" />
    <polygon points="1191,802 1194,804 1184,1043 1177,1040" fill="#555" />

    {pegs.map(([x, y]) => (
      <g key={`${x}-${y}`}>
        <path d={`M${x} ${y}L${x + 12} ${y + 13}`} stroke="#c8c8c8" strokeWidth="7" opacity=".5" />
        <ellipse cx={x} cy={y} rx="4.500" ry="5" fill="#606162" opacity=".26" />
        <ellipse cx={x + 12} cy={y + 13} rx="4.500" ry="5" fill="#707173" opacity=".3" />
      </g>
    ))}

    {range(12).map((index) => (
      <Divider key={index} index={index} />
    ))}
    <path d="M1186 1048L1663 941" stroke="#686968" strokeWidth="5" />

    <g stroke="#fff" strokeWidth="1.500" fill="none">
      <path d="M1202 330v5L1680 227v-5M1441 277v4M1198 335h4L1171 1037l14 14" />
      <path d="M1185 686h-6M1171 1037h-5M1178 1044h-5M1185 1051l-3 4" />
    </g>

    <path d="M1438 286l15-3 7 8-15 3z" stroke="#f00000" strokeWidth="1.300" fill="none" />
    <circle cx="1448" cy="293" r="3.600" fill="#e60000" />
    <circle cx="1446" cy="301" r="3.600" fill="#e60000" />
    <circle cx="1448" cy="307" r="3.600" fill="#d83c3c" />
    <circle cx="1448" cy="312" r="3.600" fill="#e65c5c" />
    <circle cx="1442" cy="318" r="3.600" fill="#e65c5c" />
    <circle cx="1459" cy="320" r="3.600" fill="#e65c5c" />

    <g strokeWidth="4">
      <path d="M2086 1086l1-31" stroke="#00c400" />
      <path d="M2088 1086l32-7" stroke="#dd0000" />
      <path d="M2088 1089l13 13" stroke="#0000b4" />
    </g>
    <path d="M2088 1045l5 11h-10z" fill="#00f000" />
    <path d="M2130 1077l-10-3 2 9z" fill="#a00000" />
    <circle cx="2103" cy="1104" r="4" fill="#0000f0" />
    <circle cx="2086" cy="1087" r="6" fill="#bdbdbd" />

    {axisText.map(([label, x, y, size]) => (
      <text key={`${label}-${x}`} x={x} y={y} fontSize={size}>
        {label}
      </text>
    ))}
  </svg>
);

const Workspace = () => (
  <Center>
    <Viewport>
      <Scene />
    </Viewport>
    <WorkTabs role="tablist">
      <WorkTab role="tab" $active>
        Workspace
        <Svg size={13}>
          <path d="M2 2l12 12M14 2L2 14" stroke="#111" strokeWidth="2.500" />
        </Svg>
      </WorkTab>
      <WorkTab role="tab">
        Start Page
        <Svg size={13}>
          <path d="M0 0h16v16H0z" fill="#12a15f" />
          <path d="M8 4v8M4 8h8" stroke="#fff" strokeWidth="2.500" />
        </Svg>
      </WorkTab>
    </WorkTabs>
  </Center>
);

/* ---------- windows ---------- */

const ViewTools = styled.div`
  display: flex;
  flex: none;
  gap: 4px;
  height: 27px;
  padding: 4px 1px 0;
  border-radius: 4px 4px 0 0;
  background: #fff;
`;

const ViewTool = styled.button`
  display: grid;
  place-items: center;
  width: 22px;
  height: 22px;
  border: 1px solid #a9c6fa;
  border-radius: 3px;
  background: #d5e1fb;
`;

const Table = styled.table`
  width: 100%;
  table-layout: fixed;
  border-collapse: separate;
  border-spacing: 0;
  text-align: left;
`;

const HeadCell = styled.th`
  width: ${({ $width }) => ($width ? `${$width}px` : 'auto')};
  height: 30px;
  padding: 0 6px;
  border-right: ${({ $last }) => ($last ? '0' : '4px solid #fff')};
  background: #f1f1f1;
  font-size: 14px;
  line-height: 18px;
`;

const SortMark = styled.span`
  position: absolute;
  top: 0;
  left: 100px;
`;

const TableWrap = styled.div`
  flex: 1;
  position: relative;
  min-height: 0;
  padding: 2px 0 0 1px;
`;

const ViewCell = styled.td`
  height: 29px;
  padding: 0 0 0 3px;
  white-space: nowrap;
`;

const ViewName = styled.label`
  display: flex;
  align-items: center;
  gap: 6px;
  padding-left: ${({ $indent }) => $indent}px;
`;

const viewRows = [
  ['3D Views', 'view3d'],
  ['3D View <...', 'view3dActive', '[1] 0.05 s'],
  ['Cross Plots', 'cross'],
  ['Histograms', 'histogram'],
  ['Motion Preview', 'motionPreview'],
  ['Multi Time Plots', 'multi'],
  ['Particles Details', 'details'],
  ['Space Plots', 'space'],
  ['Time Plots', 'time'],
];

const viewTools = [
  ['Add 3D view', 'view3d'],
  ['Add time plot', 'time'],
  ['Add histogram', 'histogram'],
  ['Add space plot', 'space'],
  ['Add cross plot', 'cross'],
  ['Add multi time plot', 'multi'],
  ['Add motion preview', 'motionPreview'],
  ['Add particles details', 'details'],
];

const WindowsDock = () => (
  <Dock $top={2}>
    <DockTitle title="Windows" />
    <ViewTools>
      {viewTools.map(([label, icon]) => (
        <ViewTool key={label} aria-label={label}>
          <Svg>
            {treeIcons[icon]}
            <Plus x={11.5} y={11} />
          </Svg>
        </ViewTool>
      ))}
      <ViewTool aria-label="Rename">
        <TreeIcon name="label" />
      </ViewTool>
      <ViewTool aria-label="Remove">
        <TreeIcon name="remove" />
      </ViewTool>
    </ViewTools>
    <Panel $column>
      <TableWrap>
        <SortMark>
          <Arrow dir="up" weight={1.2} />
        </SortMark>
        <Table>
          <thead>
            <tr>
              <HeadCell $width={215}>View</HeadCell>
              <HeadCell $last>Timestep</HeadCell>
            </tr>
          </thead>
          <tbody>
            {viewRows.map(([name, icon, step]) => (
              <tr key={name}>
                <ViewCell>
                  <ViewName $indent={step ? 59 : name === '3D Views' ? 3 : 29}>
                    {name === '3D Views' && <Arrow size={14} color="#333" />}
                    {name === '3D Views' && <span />}
                    {step && <CheckBox type="checkbox" defaultChecked />}
                    <TreeIcon name={icon} />
                    {name}
                  </ViewName>
                </ViewCell>
                <ViewCell>{step}</ViewCell>
              </tr>
            ))}
          </tbody>
        </Table>
      </TableWrap>
      <ScrollBar horizontal thumb={266} after={31} />
    </Panel>
  </Dock>
);

/* ---------- bottom docks ---------- */

const BottomDocks = styled.div`
  display: grid;
  grid-template-columns: minmax(0, 771fr) minmax(0, 763fr) minmax(0, 1011fr);
  gap: 7px;
  flex: none;
  height: 205px;
`;

const AnimationBody = styled.div`
  flex: 1;
  display: flex;
  min-height: 0;
  padding: 13px 12px 13px 16px;
`;

const AnimationForm = styled.div`
  flex: 1;
  display: grid;
  grid-template-columns: 190px 1fr;
  grid-template-rows: 28px 29px 29px;
  row-gap: 8px;
  align-items: center;
  align-content: start;
`;

const ValueText = styled.span`
  padding-left: 4px;
`;

const AnimationTabs = styled.div`
  display: flex;
  flex: none;
  height: 36px;

  &::after {
    content: '';
    flex: 1;
    border-top: 1px solid #8f8f8f;
  }
`;

const Docks = () => (
  <BottomDocks>
    <Dock>
      <DockTitle title="Progress" />
      <Panel $column>
        <TableWrap>
          <Table>
            <thead>
              <tr>
                <HeadCell $width={280}>Task</HeadCell>
                <HeadCell $width={150}>Progress</HeadCell>
                <HeadCell $width={105}>Elapsed</HeadCell>
                <HeadCell $width={105}>Remaining</HeadCell>
                <HeadCell $last>Message</HeadCell>
              </tr>
            </thead>
          </Table>
        </TableWrap>
        <ScrollBar horizontal thumb={717} after={20} />
      </Panel>
    </Dock>
    <Dock>
      <DockTitle title="Status" />
      <Panel />
    </Dock>
    <Dock>
      <DockTitle title="Animation" />
      <AnimationBody>
        <AnimationForm>
          <span>Window</span>
          <ValueText>3D View &lt;01&gt;</ValueText>
          <label htmlFor="interpolation">Camera Interpolation:</label>
          <Select id="interpolation" value="Linear" />
          <label htmlFor="fps">FPS:</label>
          <TextInput id="fps" defaultValue="30" />
        </AnimationForm>
        <ScrollBar thumb={23} after={60} />
      </AnimationBody>
      <AnimationTabs role="tablist">
        <Tab role="tab" $active>
          Animation
        </Tab>
        <Tab role="tab">Simulation Log</Tab>
      </AnimationTabs>
    </Dock>
  </BottomDocks>
);

const StatusBar = styled.footer`
  display: flex;
  align-items: center;
  gap: 4px;
  flex: none;
  height: 49px;
  padding: 0 6px 0 1px;
  border-bottom: 2px solid #adb2b9;
`;

const StatusDivider = styled.span`
  flex: none;
  width: 1px;
  height: 44px;
  background: #d0d0d0;
`;

const ProgressTrack = styled.div`
  flex: 1;
  height: 31px;
  border: 1px solid #bcbcbc;
  background: #e6e6e6;
`;

const ProgressFill = styled.div`
  height: 100%;
  background: linear-gradient(90deg, #24c03c, #06b025 40%);
`;

const Percent = styled.span`
  width: 34px;
  margin-left: 6px;
`;

const AutoRefresh = styled.label`
  display: flex;
  align-items: center;
  gap: 8px;
`;

const Annotations = styled.svg`
  position: absolute;
  right: 50px;
  bottom: 26px;
  pointer-events: none;

  text {
    fill: #f01c24;
    font-size: 29px;
  }
`;

const Watermark = styled.span`
  position: absolute;
  right: 15px;
  bottom: 1px;
  color: rgba(110, 110, 110, 0.75);
  font-family: 'Noto Sans', 'Noto Sans CJK SC', sans-serif;
  font-size: 20px;
  line-height: 28px;
  text-shadow: 1px 1px 1px rgba(255, 255, 255, 0.8);
  pointer-events: none;
`;

const Tool = ({ name, label, size }) => (
  <IconButton aria-label={label}>
    <ToolIcon name={name} size={size} />
  </IconButton>
);

const MenuArrow = ({ label }) => (
  <IconButton $narrow aria-label={label}>
    <Arrow />
  </IconButton>
);

export default function App() {
  const progress = 3;

  return (
    <Window>
      <GlobalStyle />
      <TopStrip />
      <Toolbar $height={50}>
        <Handle />
        <Tool name="doc" label="New" />
        <IconGroup>
          <Tool name="folder" label="Open" />
          <MenuArrow label="Recent projects" />
        </IconGroup>
        <Tool name="save" label="Save" />
        <Handle />
        <Tool name="undo" label="Undo" />
        <Tool name="redo" label="Redo" />
        <Handle />
        <IconGroup>
          <Tool name="fit" label="Fit view" />
          <MenuArrow label="View options" />
        </IconGroup>
        <Separator />
        <Tool name="camera" label="Previous camera" size={24} />
        <Tool name="cameraOff" label="Next camera" size={24} />
        <Separator />
        <Tool name="rotate" label="Rotate" />
        <Tool name="box" label="Perspective" />
        <Tool name="mouse" label="Mouse settings" size={24} />
        <Handle />
        <Tool name="plus" label="Add preset" size={20} />
        <Select width={172} value="Select a Preset" aria-label="Preset" />
        <Tool name="sync" label="Update preset" size={20} />
        <Tool name="cross" label="Delete preset" size={20} />
        <Handle />
        <IconGroup>
          <Tool name="paintBody" label="Geometry coloring" size={24} />
          <MenuArrow label="Geometry list" />
        </IconGroup>
        <Select width={349} value="<Solid color>" aria-label="Geometry color" />
        <IconButton aria-label="Particle coloring">
          <Svg size={28} box={28}>
            {toolIcons.paintParticle}
            <path d="M20 23h8l-4 5z" fill="#222" />
          </Svg>
        </IconButton>
        <Select width={349} value="<Solid color>" aria-label="Particle color" />
      </Toolbar>
      <Toolbar $height={48}>
        <Handle />
        <LabelButton>
          <ToolIcon name="start" />
          Start
        </LabelButton>
        <LabelButton>
          <ToolIcon name="clear" />
          Clear Results
        </LabelButton>
        <Handle />
        <TimeLabel htmlFor="time">Time:</TimeLabel>
        <Select id="time" width={173} value="[1] 0.05 s" />
        <Tool name="first" label="First step" />
        <Tool name="prev" label="Previous step" />
        <Tool name="next" label="Next step" />
        <Tool name="last" label="Last step" />
        <Separator />
        <Tool name="play" label="Play" />
        <SliderBox>
          <Slider type="range" defaultValue={100} aria-label="Timestep" />
          <Ticks />
        </SliderBox>
        <Tool name="funnel" label="Filter timesteps" />
      </Toolbar>
      <Main>
        <LeftColumn>
          <DataDock />
          <EditorsDock />
        </LeftColumn>
        <Workspace />
        <WindowsDock />
      </Main>
      <Docks />
      <StatusBar>
        <ProgressTrack role="progressbar" aria-valuenow={progress} aria-label="Simulation progress">
          <ProgressFill style={{ width: `${progress}%` }} />
        </ProgressTrack>
        <Percent>{progress}%</Percent>
        <StatusDivider />
        <ActionButton>
          <TreeIcon name="stop" size={15} />
          Stop
        </ActionButton>
        <StatusDivider />
        <ActionButton>
          <TreeIcon name="refresh" size={15} />
          Refresh
        </ActionButton>
        <StatusDivider />
        <AutoRefresh>
          <CheckBox type="checkbox" $size={13} />
          Auto Refresh
        </AutoRefresh>
      </StatusBar>
      <Annotations width="200" height="190" viewBox="2309 1256 200 190" fill="#f01c24">
        <text x="2372" y="1289">2</text>
        <text x="2482" y="1303">1</text>
        <path d="M2380 1326q4-3 6 2l-22 72 8 6-21 22-3-29 9 3 20-73z" />
        <path d="M2475 1336q4-3 6 2l-22 72 8 6-21 20-3-32 9 3 20-68z" />
      </Annotations>
      <Watermark>CSDN @天才小小傲</Watermark>
    </Window>
  );
}
